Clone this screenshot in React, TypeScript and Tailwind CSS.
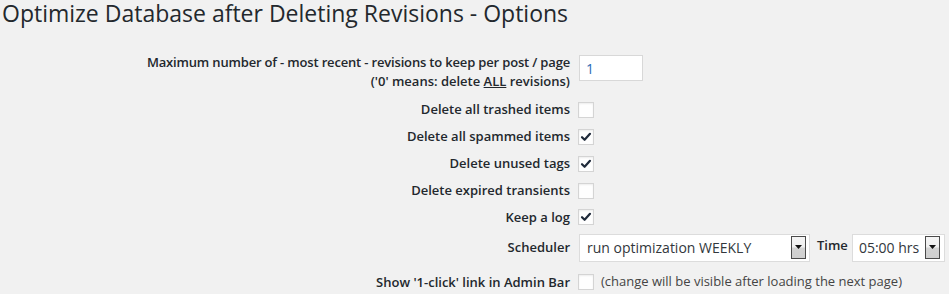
import React from "react";

const font = { fontFamily: '"Open Sans", "Noto Sans", sans-serif' };

function Check({ checked }: { checked?: boolean }) {
  return (
    <div className="w-[16px] h-[16px] border border-[#d4d4d4] bg-[#fefefe] shadow-[inset_0_1px_2px_rgba(0,0,0,0.07)] flex items-center justify-center">
      {checked && (
        <svg width="12" height="12" viewBox="0 0 12 12">
          <path d="M2 6.2 L4.6 8.8 L10 2.8" fill="none" stroke="#1f2a3a" strokeWidth="2.2" strokeLinecap="round" strokeLinejoin="round" />
        </svg>
      )}
    </div>
  );
}

function Arrow() {
  return (
    <div className="w-[15px] h-[23px] border border-[#4a4a4a] bg-[linear-gradient(#f4f4f4,#f0f0f0_45%,#d2d2d2_55%,#cfcfcf)] flex items-center justify-center">
      <svg width="7" height="4" viewBox="0 0 7 4">
        <path d="M0 0 L7 0 L3.5 4 Z" fill="#111" />
      </svg>
    </div>
  );
}

function Row({ label, children, h }: { label: React.ReactNode; children: React.ReactNode; h: string }) {
  return (
    <div className={`flex items-center ${h}`}>
      <div className="w-[570px] text-right text-[13px] font-semibold text-[#23282d] leading-[19px]">{label}</div>
      <div className="ml-[8px] flex items-center">{children}</div>
    </div>
  );
}

export default function App() {
  return (
    <div className="w-[949px] h-[294px] bg-[#f1f1f1] overflow-hidden" style={font}>
      <h2 className="pt-[1px] text-[23px] leading-[24px] font-normal text-[#23282d] pl-[2px]">
        Optimize Database after Deleting Revisions - Options
      </h2>
      <div className="mt-[28px] flex items-start h-[43px]">
        <div className="w-[570px] text-right text-[13px] font-semibold text-[#23282d] leading-[19px]">
          <div className="tracking-[-0.17px]">Maximum number of - most recent - revisions to keep per post / page</div>
          <div>
            ('0' means: delete <span className="underline">ALL</span> revisions)
          </div>
        </div>
        <div className="ml-[9px] mt-[2px] w-[64px] h-[26px] border border-[#d8d8d8] bg-white flex items-center pl-[6px] text-[14px] text-[#2a6ab5]">
          1
        </div>
      </div>
      <Row label="Delete all trashed items" h="h-[27px]">
        <Check />
      </Row>
      <Row label="Delete all spammed items" h="h-[27px]">
        <Check checked />
      </Row>
      <Row label="Delete unused tags" h="h-[27px]">
        <Check checked />
      </Row>
      <Row label="Delete expired transients" h="h-[27px]">
        <Check />
      </Row>
      <Row label="Keep a log" h="h-[26px]">
        <Check checked />
      </Row>
      <Row label="Scheduler" h="h-[35px]">
        <div className="ml-[1px] w-[231px] h-[28px] border border-[#dcdcdc] bg-white flex items-start justify-between pt-[1px] pr-[3px]">
          <span className="pl-[7px] text-[14px] leading-[24px] text-[#32373c]">run optimization WEEKLY</span>
          <Arrow />
        </div>
        <span className="ml-[7px] text-[13px] font-semibold text-[#23282d] mb-[3px]">Time</span>
        <div className="ml-[4px] w-[93px] h-[28px] border border-[#dcdcdc] bg-white flex items-start justify-between pt-[1px] pr-[4px]">
          <span className="pl-[6px] text-[14px] leading-[24px] text-[#32373c]">05:00 hrs</span>
          <Arrow />
        </div>
      </Row>
      <Row label="Show '1-click' link in Admin Bar" h="h-[34px]">
        <Check />
        <span className="ml-[7px] text-[13px] text-[#444]">(change will be visible after loading the next page)</span>
      </Row>
    </div>
  );
}
